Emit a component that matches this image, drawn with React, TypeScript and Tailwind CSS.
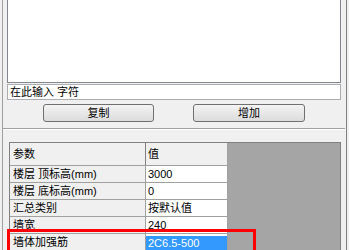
import React from 'react';

const rows = [
  { name: '楼层 顶标高(mm)', value: '3000' },
  { name: '楼层 底标高(mm)', value: '0' },
  { name: '汇总类别', value: '按默认值' },
  { name: '墙宽', value: '240' },
];

const font = 'font-["Liberation_Sans","Noto_Sans_CJK_SC",sans-serif]';

function Button({ label, className }: { label: string; className: string }) {
  return (
    <button
      className={`flex h-[18px] items-center justify-center rounded-[3px] border border-[#707070] bg-gradient-to-b from-[#f4f4f4] to-[#dcdcdc] text-[11px] leading-none text-black ${className}`}
    >
      {label}
    </button>
  );
}

export default function App() {
  return (
    <div className={`relative h-[250px] w-[349px] overflow-hidden bg-[#f0f0f0] text-black ${font}`}>
      <div className="ml-[2px] flex h-full w-[345px] flex-col border-x border-l-[#a0a0a0] border-r-[#808080]">
        {/* 上段：候補リストと入力欄 */}
        <div className="pl-[4px] pr-[4px]">
          <div className="-mt-px h-[84px] w-[334px] border border-[#828790] bg-white" />
          <div className="mt-px flex h-[16px] w-[334px] items-center border border-[#abadb3] bg-white pl-[2px] text-[11px] leading-none">
            在此输入 字符
          </div>
        </div>
        <div className="mt-[4px] flex">
          <Button label="复制" className="ml-[40px] w-[111px]" />
          <Button label="增加" className="ml-[39px] w-[112px]" />
        </div>
        <div className="mt-[6px] mr-px h-[2px] border-t border-b border-t-[#a0a0a0] border-b-white" />

        {/* 下段：パラメータ表 */}
        <div className="ml-[6px] mt-[12px] w-[332px] flex-1 border border-[#808080] bg-[#a5a5a5]">
          <div className="w-[218px]">
            <div className="flex h-[23px] border-b border-[#a0a0a0] bg-[#f0f0f0] text-[11px]">
              <div className="flex w-[136px] items-center border-r border-[#808080] pl-[3px]">参数</div>
              <div className="flex w-[82px] items-center border-r border-[#a0a0a0] pl-[2px]">值</div>
            </div>
            {rows.map((r) => (
              <div key={r.name} className="flex h-[17px] border-b border-[#a0a0a0] text-[11px]">
                <div className="flex w-[136px] items-center border-r border-[#a0a0a0] bg-[#f0f0f0] pl-[3px]">
                  {r.name}
                </div>
                <div className="flex w-[82px] items-center border-r border-[#a0a0a0] bg-white pl-[2px]">
                  {r.value}
                </div>
              </div>
            ))}
            <div className="flex h-[17px] border-b border-[#a0a0a0] text-[11px]">
              <div className="flex w-[136px] items-center border-r border-[#a0a0a0] bg-[#f0f0f0] pl-[3px]">
                墙体加强筋
              </div>
              <div className="w-[82px] border-r border-[#a0a0a0] bg-white pt-[2px]">
                <div className="flex h-full items-center bg-[#3399ff] pl-[2px] text-white">2C6.5-500</div>
              </div>
            </div>
          </div>
        </div>
      </div>

      {/* 注記の赤枠 */}
      <div className="absolute left-[7px] top-[229px] h-[40px] w-[249px] border-[3px] border-[#ff0000]" />
    </div>
  );
}
